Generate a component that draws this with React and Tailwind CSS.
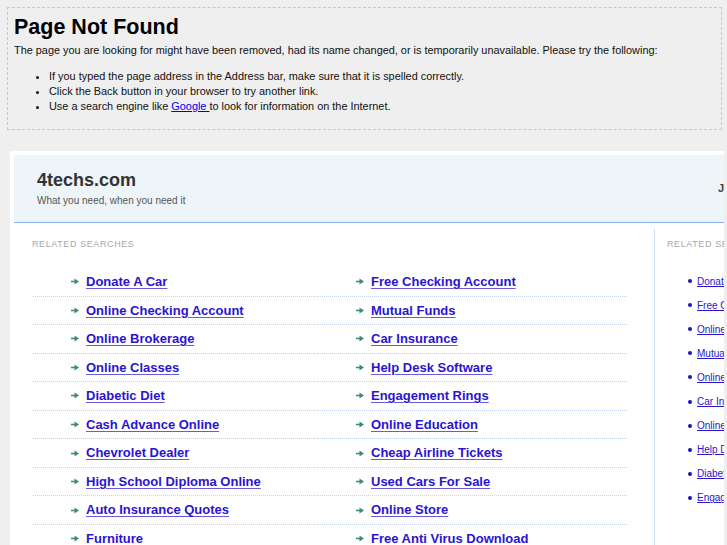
const leftCol = [
  "Donate A Car",
  "Online Checking Account",
  "Online Brokerage",
  "Online Classes",
  "Diabetic Diet",
  "Cash Advance Online",
  "Chevrolet Dealer",
  "High School Diploma Online",
  "Auto Insurance Quotes",
  "Furniture",
];

const rightCol = [
  "Free Checking Account",
  "Mutual Funds",
  "Car Insurance",
  "Help Desk Software",
  "Engagement Rings",
  "Online Education",
  "Cheap Airline Tickets",
  "Used Cars For Sale",
  "Online Store",
  "Free Anti Virus Download",
];

const sideLinks = [
  "Donate A Car",
  "Free Checking Account",
  "Online Checking Account",
  "Mutual Funds",
  "Online Brokerage",
  "Car Insurance",
  "Online Classes",
  "Help Desk Software",
  "Diabetic Diet",
  "Engagement Rings",
];

function Arrow() {
  return (
    <svg width="8" height="7" viewBox="0 0 8 7" className="shrink-0">
      <path d="M0 3.5h4.5" stroke="#3d8a7c" strokeWidth="1.6" />
      <polygon points="3.5,0.5 8,3.5 3.5,6.5" fill="#3d8a7c" />
    </svg>
  );
}

function LinkCell({ label, width }) {
  return (
    <div
      className={`${width} h-[28.56px] flex items-center gap-[7px] pl-[38px] border-b border-dotted border-[#c2d4f0]`}
    >
      <Arrow />
      <a
        href="#"
        className="text-[13px] font-bold text-[#2a14cf] underline underline-offset-[2px] decoration-[#6a5ae0] whitespace-nowrap"
      >
        {label}
      </a>
    </div>
  );
}

export default function App() {
  return (
    <div className="min-h-[545px] bg-[#efefef] overflow-hidden font-['Liberation_Sans',Arial,sans-serif]">
      {/* error box */}
      <div className="ml-[7px] mr-[5px] mt-[7px] border border-dashed border-[#c8c8c8] pl-[6px] pt-[5px] pb-[15px] text-[#111]">
        <h1 className="text-[21.5px] leading-[28px] font-bold text-black">Page Not Found</h1>
        <p className="mt-[2px] text-[10.9px] leading-[14px]">
          The page you are looking for might have been removed, had its name changed, or is temporarily unavailable. Please try the following:
        </p>
        <ul className="mt-[12px] pl-[35px] list-disc text-[10.9px] leading-[15px]">
          <li>If you typed the page address in the Address bar, make sure that it is spelled correctly.</li>
          <li>Click the Back button in your browser to try another link.</li>
          <li>
            Use a search engine like{" "}
            <a href="#" className="text-[#0000ee] underline">Google </a>
            to look for information on the Internet.
          </li>
        </ul>
      </div>

      {/* parked page */}
      <div className="ml-[10px] mt-[21px] w-[714px] bg-white pt-[4px] pl-[4px] overflow-hidden">
        <div className="w-[900px]">
          {/* header */}
          <div className="h-[68px] flex bg-[#eef5f8] border-b border-[#8db3e4]">
            <div className="w-[704px] shrink-0 pl-[23px] pt-[14px]">
              <div className="text-[18px] leading-[22px] font-bold text-[#333]">4techs.com</div>
              <div className="mt-[3px] text-[10px] leading-[13px] text-[#555]">What you need, when you need it</div>
            </div>
            <div className="flex items-center text-[11px] font-bold text-[#444] whitespace-nowrap">Jump to Bookmark</div>
          </div>

          {/* body */}
          <div className="flex">
            <div className="w-[640px] shrink-0 pl-[18px] pt-[15px]">
              <div className="text-[9px] leading-[12px] tracking-[0.6px] text-[#a8a8a8]">RELATED SEARCHES</div>
              <div className="mt-[18px] ml-[1px] flex">
                <div className="flex flex-col">
                  {leftCol.map((l) => (
                    <LinkCell key={l} label={l} width="w-[285px]" />
                  ))}
                </div>
                <div className="flex flex-col">
                  {rightCol.map((l) => (
                    <LinkCell key={l} label={l} width="w-[309px]" />
                  ))}
                </div>
              </div>
            </div>

            <div className="mt-[6px] w-[220px] shrink-0 border-l border-[#cfdff2] pl-[12px] pt-[9px] pb-[20px]">
              <div className="text-[9px] leading-[12px] tracking-[0.6px] text-[#a8a8a8] whitespace-nowrap">RELATED SEARCHES</div>
              <div className="mt-[19px] flex flex-col">
                {sideLinks.map((l) => (
                  <div key={l} className="h-[24.1px] flex items-center gap-[5px] pl-[21px]">
                    <span className="w-[4px] h-[4px] rounded-full bg-[#1d12b8] shrink-0" />
                    <a href="#" className="text-[10px] text-[#2a14cf] underline whitespace-nowrap">
                      {l}
                    </a>
                  </div>
                ))}
              </div>
            </div>
          </div>
        </div>
      </div>
    </div>
  );
}
